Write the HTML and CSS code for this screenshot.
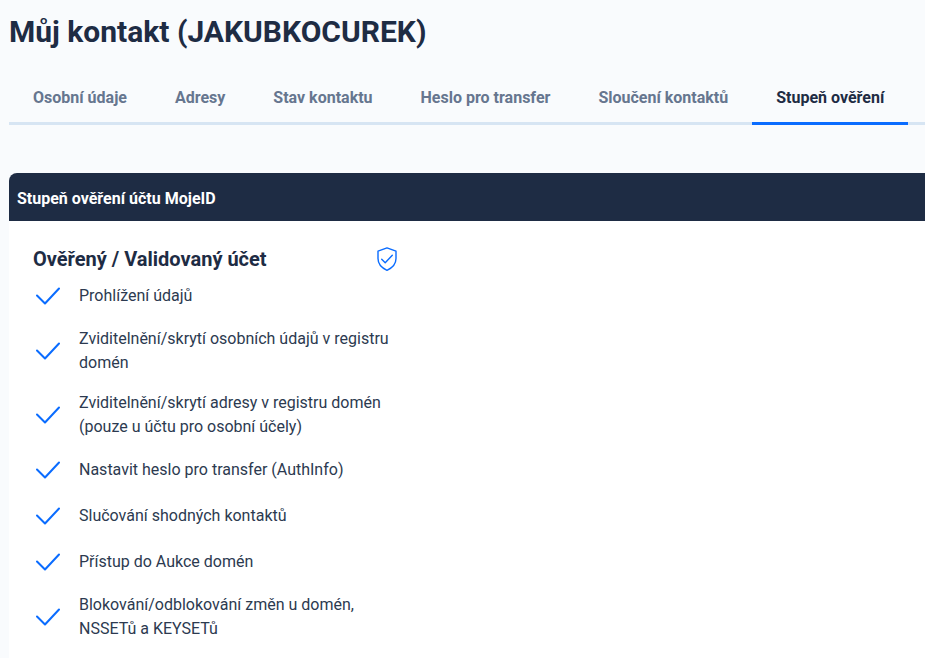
FILE: index.html
```html
<!DOCTYPE html>
<html lang="cs">
<head>
<meta charset="utf-8">
<title>Můj kontakt</title>
<link rel="stylesheet" href="styles.css">
</head>
<body>
<main class="page">
  <h1 class="title">Můj kontakt (JAKUBKOCUREK)</h1>
  <nav class="tabs">
    <a class="tab">Osobní údaje</a>
    <a class="tab">Adresy</a>
    <a class="tab">Stav kontaktu</a>
    <a class="tab">Heslo pro transfer</a>
    <a class="tab">Sloučení kontaktů</a>
    <a class="tab active">Stupeň ověření</a>
  </nav>
  <section class="card">
    <header class="card-head">Stupeň ověření účtu MojeID</header>
    <div class="card-body">
      <div class="column">
        <div class="level">
          <h2 class="level-name">Ověřený / Validovaný účet</h2>
          <svg class="shield" viewBox="0 0 24 24" aria-hidden="true"><path d="M12 0.900 21 4.200V11.500c0 5.300-3.500 9.300-9 11.800C6.500 20.800 3 16.800 3 11.500V4.200Z"/><path d="M6.700 12.200 10.200 15.700 17.300 8.300"/></svg>
        </div>
        <ul class="features">
          <li class="feature"><svg class="check" viewBox="0 0 24 24" aria-hidden="true"><path d="M1 11.500 9 19.500 23 4.500"/></svg><span>Prohlížení údajů</span></li>
          <li class="feature"><svg class="check" viewBox="0 0 24 24" aria-hidden="true"><path d="M1 11.500 9 19.500 23 4.500"/></svg><span>Zviditelnění/skrytí osobních údajů v registru domén</span></li>
          <li class="feature"><svg class="check" viewBox="0 0 24 24" aria-hidden="true"><path d="M1 11.500 9 19.500 23 4.500"/></svg><span>Zviditelnění/skrytí adresy v registru domén (pouze u účtu pro osobní účely)</span></li>
          <li class="feature"><svg class="check" viewBox="0 0 24 24" aria-hidden="true"><path d="M1 11.500 9 19.500 23 4.500"/></svg><span>Nastavit heslo pro transfer (AuthInfo)</span></li>
          <li class="feature"><svg class="check" viewBox="0 0 24 24" aria-hidden="true"><path d="M1 11.500 9 19.500 23 4.500"/></svg><span>Slučování shodných kontaktů</span></li>
          <li class="feature"><svg class="check" viewBox="0 0 24 24" aria-hidden="true"><path d="M1 11.500 9 19.500 23 4.500"/></svg><span>Přístup do Aukce domén</span></li>
          <li class="feature"><svg class="check" viewBox="0 0 24 24" aria-hidden="true"><path d="M1 11.500 9 19.500 23 4.500"/></svg><span>Blokování/odblokování změn u domén, NSSETů a KEYSETů</span></li>
        </ul>
      </div>
    </div>
  </section>
</main>
</body>
</html>
```
FILE: styles.css
```css
* { box-sizing: border-box; }
html, body { margin: 0; height: 100%; overflow: hidden; }
body {
  background: #f9fbfd;
  color: #1e2c44;
  font-family: Roboto, "Liberation Sans", sans-serif;
}
.page { padding: 12px 0 0 9px; height: 658px; display: flex; flex-direction: column; }
.title { margin: 0; font-size: 30px; line-height: 40px; font-weight: 700; }
.tabs {
  display: flex;
  margin-top: 20px;
  height: 53px;
  border-bottom: 3px solid #d7e5f3;
}
.tab {
  padding: 0 24px;
  height: 53px;
  line-height: 51px;
  font-size: 16px;
  font-weight: 700;
  color: #66768f;
  border-bottom: 3px solid transparent;
}
.tab.active { color: #1e2c44; border-bottom-color: #0a6cff; }
.card { margin-top: 48px; flex: 1; background: #fff; border-radius: 8px 0 0 0; overflow: hidden; }
.card-head {
  height: 48px;
  line-height: 52px;
  padding-left: 8px;
  background: #1e2c44;
  color: #fff;
  font-size: 16px;
  font-weight: 700;
}
.card-body { padding: 24px 0 0 24px; }
.column { width: 368px; }
.level { display: flex; justify-content: space-between; align-items: center; height: 28px; }
.level-name { margin: 0; font-size: 20px; line-height: 28px; font-weight: 700; }
.shield { width: 24px; height: 24px; fill: none; stroke: #0a6cff; stroke-width: 1.4; stroke-linejoin: round; stroke-linecap: round; margin-right: 2px; }
.features { list-style: none; margin: 0; padding: 0; }
.feature {
  display: flex;
  align-items: center;
  min-height: 30px;
  padding: 8px 0;
  box-sizing: content-box;
  font-size: 16px;
  line-height: 24px;
  color: #2c3a50;
}
.feature span { flex: 1; padding-right: 10px; }
.check { width: 24px; height: 24px; margin: 0 19px 0 3px; flex: none; fill: none; stroke: #0a6cff; stroke-width: 2; stroke-linecap: round; stroke-linejoin: round; }
```
